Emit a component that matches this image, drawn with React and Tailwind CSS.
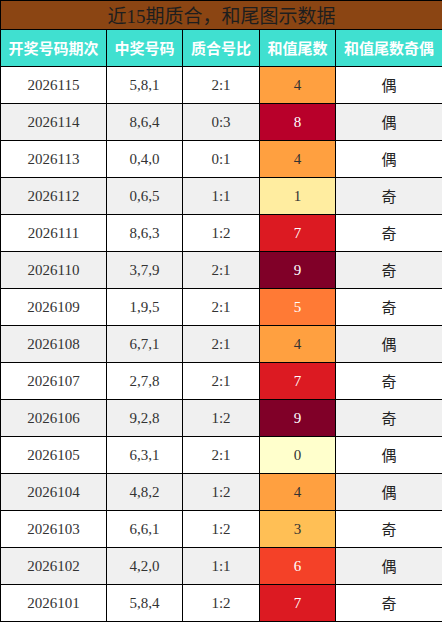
const rows = [
  ["2026115", "5,8,1", "2:1", 4, "偶"],
  ["2026114", "8,6,4", "0:3", 8, "偶"],
  ["2026113", "0,4,0", "0:1", 4, "偶"],
  ["2026112", "0,6,5", "1:1", 1, "奇"],
  ["2026111", "8,6,3", "1:2", 7, "奇"],
  ["2026110", "3,7,9", "2:1", 9, "奇"],
  ["2026109", "1,9,5", "2:1", 5, "奇"],
  ["2026108", "6,7,1", "2:1", 4, "偶"],
  ["2026107", "2,7,8", "2:1", 7, "奇"],
  ["2026106", "9,2,8", "1:2", 9, "奇"],
  ["2026105", "6,3,1", "2:1", 0, "偶"],
  ["2026104", "4,8,2", "1:2", 4, "偶"],
  ["2026103", "6,6,1", "1:2", 3, "奇"],
  ["2026102", "4,2,0", "1:1", 6, "偶"],
  ["2026101", "5,8,4", "1:2", 7, "奇"],
];

// 和值尾数 cell colours
const tail = {
  0: "bg-[#ffffcc] text-[#333]",
  1: "bg-[#ffeda0] text-[#333]",
  2: "bg-[#fed976] text-[#333]",
  3: "bg-[#ffbf55] text-[#333]",
  4: "bg-[#ffa040] text-[#333]",
  5: "bg-[#ff7a35] text-white",
  6: "bg-[#f44128] text-white",
  7: "bg-[#dc1a22] text-white",
  8: "bg-[#b8002a] text-white",
  9: "bg-[#800028] text-white",
};

const serif = "font-['Liberation_Serif','Noto_Sans_CJK_SC',serif]";
const cjk = "font-['Noto_Sans_CJK_SC',sans-serif]";

export default function App() {
  return (
    <div className="w-[442px] h-[622px] bg-white overflow-hidden">
      <table className="w-[442px] border-collapse table-fixed">
        <colgroup>
          <col className="w-[106px]" />
          <col className="w-[76px]" />
          <col className="w-[77px]" />
          <col className="w-[76px]" />
          <col className="w-[107px]" />
        </colgroup>
        <thead>
          <tr className="h-[29px]">
            <th
              colSpan={5}
              className={`bg-[#8b4513] border border-black p-0 text-[19px] font-normal leading-none text-[#1e1e1e] ${cjk}`}
            >
              近<span className={serif}>15</span>期质合，和尾图示数据
            </th>
          </tr>
          <tr className="h-[37px]">
            {["开奖号码期次", "中奖号码", "质合号比", "和值尾数", "和值尾数奇偶"].map((h) => (
              <th
                key={h}
                className={`bg-[#40e0d0] border border-black p-0 text-[15px] font-bold text-white ${cjk}`}
              >
                {h}
              </th>
            ))}
          </tr>
        </thead>
        <tbody>
          {rows.map((r, i) => (
            <tr key={r[0]} className={`h-[37px] ${i % 2 ? "bg-[#f0f0f0]" : "bg-white"}`}>
              <td className={`border border-black p-0 text-center text-[15px] text-[#333] ${serif}`}>{r[0]}</td>
              <td className={`border border-black p-0 text-center text-[15px] text-[#333] ${serif}`}>{r[1]}</td>
              <td className={`border border-black p-0 text-center text-[15px] text-[#333] ${serif}`}>{r[2]}</td>
              <td className={`border border-black p-0 text-center text-[15px] ${serif} ${tail[r[3]]}`}>{r[3]}</td>
              <td className={`border border-black p-0 text-center text-[15px] text-[#222] ${cjk}`}>{r[4]}</td>
            </tr>
          ))}
        </tbody>
      </table>
    </div>
  );
}
